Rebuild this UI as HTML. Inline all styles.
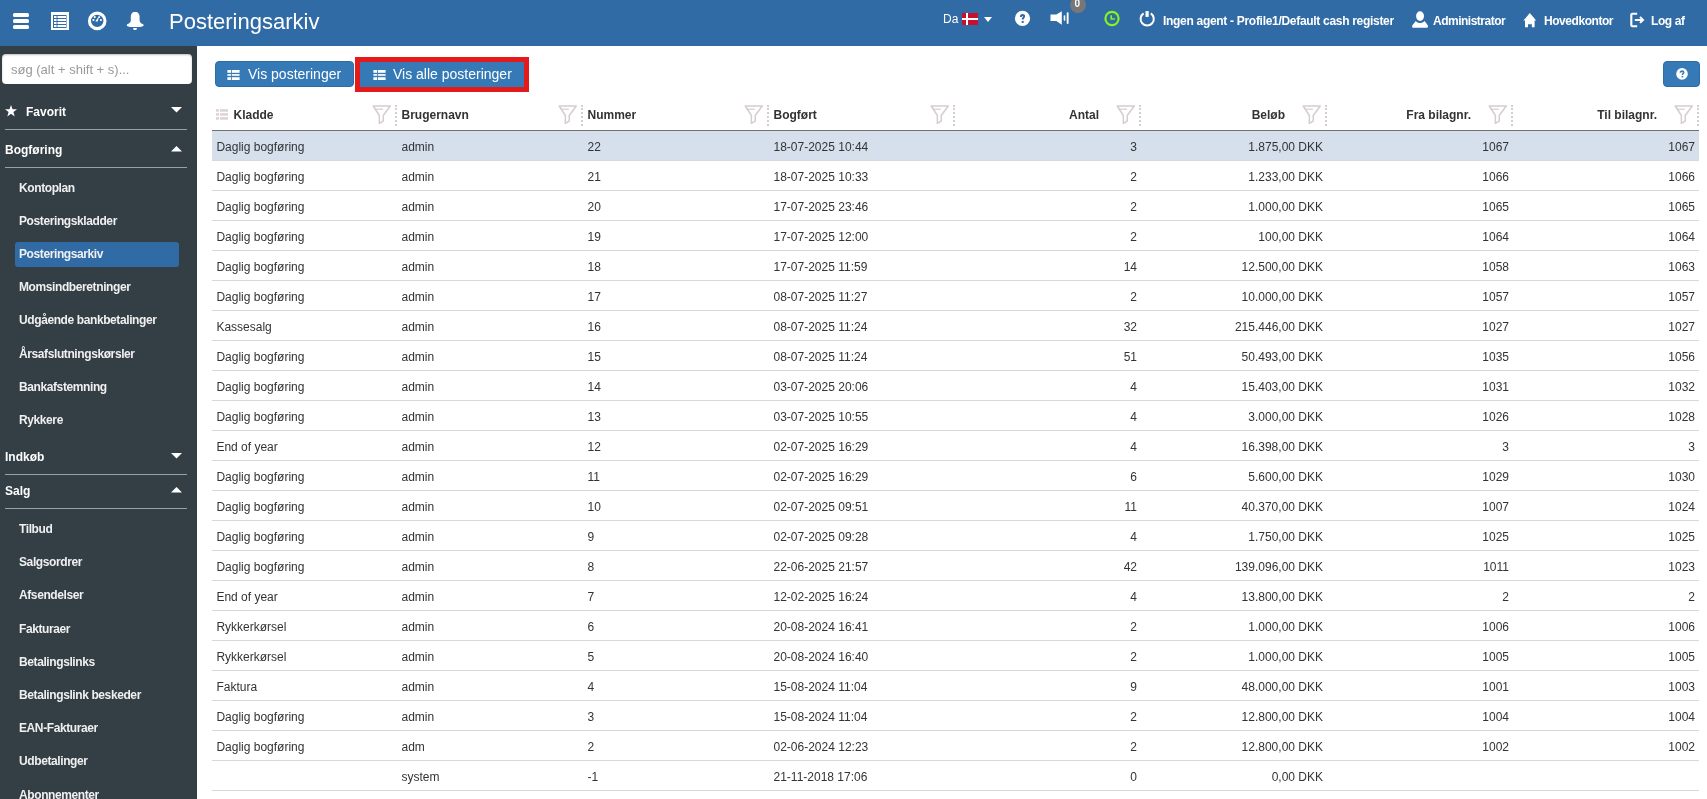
<!DOCTYPE html><html><head><meta charset="utf-8"><style>
*{margin:0;padding:0;box-sizing:border-box}
html,body{will-change:transform;width:1707px;height:799px;overflow:hidden;background:#fff;font-family:"Liberation Sans",sans-serif;color:#333}
.a{position:absolute}
#top{position:absolute;left:0;top:0;width:1707px;height:46px;background:#306ba5}
#side{position:absolute;left:0;top:46px;width:197px;height:753px;background:#343e45}
.tt{position:absolute;color:#fff;font-size:12px;font-weight:bold;line-height:14px;white-space:nowrap}
.si{position:absolute;left:19px;color:#f0f0f0;font-size:12px;font-weight:bold;line-height:14px;white-space:nowrap;letter-spacing:-0.4px}
.sh{position:absolute;left:5px;color:#fff;font-size:12px;font-weight:bold;line-height:14px;white-space:nowrap}
.sep{position:absolute;left:5px;width:182px;height:1px;background:#9aa0a4}
.btn{position:absolute;background:#357ab7;border:1px solid #2e6da4;border-radius:4px;color:#fff;font-size:14px;line-height:16px;white-space:nowrap}
.hd{position:absolute;font-size:12px;font-weight:bold;line-height:14px;color:#333;white-space:nowrap}
.c{position:absolute;font-size:12px;line-height:14px;color:#333;white-space:nowrap}
.r{text-align:right}
.rb{position:absolute;left:212px;width:1487px;height:1px;background:#ddd6d6}
.dv{position:absolute;top:105px;width:2px;height:22px;background:repeating-linear-gradient(to bottom,#d6cdcd 0,#d6cdcd 2px,transparent 2px,transparent 4px)}
</style></head><body>
<div id="top">
<div class="a" style="left:13px;top:13px;width:16px;height:4px;background:#fff;border-radius:1.5px"></div>
<div class="a" style="left:13px;top:19px;width:16px;height:4px;background:#fff;border-radius:1.5px"></div>
<div class="a" style="left:13px;top:25px;width:16px;height:4px;background:#fff;border-radius:1.5px"></div>
<svg class="a" style="left:51px;top:12px" width="18" height="18" viewBox="0 0 18 18"><rect x="0" y="0" width="18" height="18" fill="#fff"/><rect x="2" y="3" width="13.5" height="13" fill="#306ba5"/><g fill="#fff"><rect x="3" y="4" width="12" height="2"/><rect x="3" y="7" width="12" height="2"/><rect x="3" y="10" width="12" height="2"/><rect x="3" y="13" width="12" height="2"/></g><rect x="5.6" y="3" width="0.9" height="13" fill="#306ba5"/></svg>
<svg class="a" style="left:87px;top:11px" width="20" height="20" viewBox="0 0 20 20"><circle cx="10.2" cy="9.9" r="7.75" fill="none" stroke="#fff" stroke-width="3.1"/><g fill="#fff"><circle cx="6.4" cy="9" r="1.1"/><circle cx="7.7" cy="6.1" r="1.1"/><circle cx="12.3" cy="6.1" r="0.9"/><circle cx="13.9" cy="9" r="1.1"/><path d="M8.3 10.6 L10.6 10.6 L12.6 4.3Z"/></g></svg>
<svg class="a" style="left:122px;top:8px" width="26" height="26" viewBox="0 0 26 26"><path d="M11.4 3.9 L14.7 3.9 C16.6 4.6 17.6 6.5 17.6 9 L17.6 12.5 C17.6 14.5 19.5 15.8 21.5 16.5 L21.5 17.9 L18.2 18.9 L7.8 18.9 L4.9 17.9 L4.9 16.5 C6.9 15.8 8.8 14.5 8.8 12.5 L8.8 9 C8.8 6.5 9.6 4.6 11.4 3.9Z" fill="#fff"/><path d="M11 20 L15 20 L14.3 22.1 L11.7 22.1Z" fill="#fff"/></svg>
<div class="a" style="left:169px;top:9px;color:#fff;font-size:22px;line-height:26px;white-space:nowrap">Posteringsarkiv</div>
<div class="a" style="left:943px;top:12px;color:#fff;font-size:12px;line-height:14px">Da</div>
<svg class="a" style="left:962px;top:13px" width="16" height="12" viewBox="0 0 16 12"><rect width="16" height="12" fill="#c8102e"/><rect x="4" width="2" height="12" fill="#fff"/><rect y="5" width="16" height="2" fill="#fff"/></svg>
<svg class="a" style="left:984px;top:17px" width="8" height="5" viewBox="0 0 8 5"><path d="M0 0 L8 0 L4 5Z" fill="#fff"/></svg>
<svg class="a" style="left:1014px;top:10px" width="17" height="17" viewBox="0 0 17 17"><circle cx="8.5" cy="8.4" r="7.6" fill="#fff"/><path d="M6.9 6.9 C6.9 5.4 7.7 4.9 8.5 4.9 C9.5 4.9 10.1 5.5 10.1 6.3 C10.1 7.6 8.7 7.8 8.7 9.6" fill="none" stroke="#306ba5" stroke-width="2"/><rect x="7.7" y="10.9" width="2" height="2" fill="#306ba5"/></svg>
<svg class="a" style="left:1050px;top:10px" width="20" height="16" viewBox="0 0 20 16"><path d="M0.5 4.5 L2 4.5 L6.4 4.5 L11.8 1.2 L11.8 14.8 L6.4 11.1 L0.5 11.1Z" fill="#fff"/><rect x="13.7" y="5.2" width="1.6" height="5.7" rx="0.8" fill="#fff"/><rect x="16.7" y="2.2" width="1.9" height="11.7" rx="0.9" fill="#fff"/></svg>
<div class="a" style="left:1070px;top:-3px;width:16px;height:16px;border-radius:8px;background:#777"></div>
<div class="a" style="left:1069.4px;top:-2px;width:16px;color:#fff;font-size:10px;font-weight:bold;line-height:12px;text-align:center">0</div>
<svg class="a" style="left:1104px;top:10px" width="17" height="17" viewBox="0 0 17 17"><circle cx="8" cy="8.5" r="6.6" fill="none" stroke="#84f51e" stroke-width="2.2"/><path d="M7.2 5.2 L7.2 9 L10.9 9" fill="none" stroke="#84f51e" stroke-width="1.6"/></svg>
<svg class="a" style="left:1139px;top:10px" width="17" height="17" viewBox="0 0 17 17"><path d="M4.6 3.4 A6.6 6.6 0 1 0 11.8 3.4" fill="none" stroke="#fff" stroke-width="2"/><rect x="6.5" y="1.1" width="3.2" height="5.8" fill="#fff"/></svg>
<div class="tt" style="left:1163px;top:14px;letter-spacing:-0.3px">Ingen agent - Profile1/Default cash register</div>
<svg class="a" style="left:1408px;top:6px" width="24" height="26" viewBox="0 0 24 26"><ellipse cx="12.05" cy="10.1" rx="3.95" ry="4.9" fill="#fff"/><path d="M7.8 15 C9 16.5 10.5 17 12 17 C13.5 17 15 16.5 16.6 15 L19.9 19.5 L19.9 21 C19.9 21.5 19.5 21.8 19 21.8 L5 21.8 C4.5 21.8 4.2 21.5 4.2 21 L4.2 19.5Z" fill="#fff"/></svg>
<div class="tt" style="left:1433px;top:14px;letter-spacing:-0.5px">Administrator</div>
<svg class="a" style="left:1518px;top:6px" width="24" height="24" viewBox="0 0 24 24"><path d="M11.8 7 L18.2 14.6 L16.6 14.6 L16.6 21.3 L13.9 21.3 L13.9 18.2 L10 18.2 L10 21.3 L7 21.3 L7 14.6 L5.4 14.6Z" fill="#fff"/></svg>
<div class="tt" style="left:1544px;top:14px;letter-spacing:-0.45px">Hovedkontor</div>
<svg class="a" style="left:1628px;top:10px" width="20" height="20" viewBox="0 0 20 20"><path d="M9.2 3.7 L4.3 3.7 Q3.3 3.7 3.3 4.7 L3.3 15.3 Q3.3 16.3 4.3 16.3 L9.2 16.3" fill="none" stroke="#fff" stroke-width="2.1"/><path d="M6.8 9.9 L15 9.9 M12 6.9 L15 9.9 L12 12.9" fill="none" stroke="#fff" stroke-width="2"/></svg>
<div class="tt" style="left:1651px;top:14px;letter-spacing:-0.4px">Log af</div>
</div>
<div id="side"></div>
<div class="a" style="left:2px;top:54px;width:190px;height:30px;background:#fff;border-radius:4px;box-shadow:inset 0 1px 2px rgba(0,0,0,.25)"></div>
<div class="a" style="left:11px;top:62px;color:#999;font-size:13px;line-height:15px;white-space:nowrap">søg (alt + shift + s)...</div>
<svg class="a" style="left:5px;top:105px" width="12" height="12" viewBox="0 0 12 12"><path d="M6 0 L7.5 4.2 L12 4.3 L8.4 7 L9.7 11.5 L6 8.8 L2.3 11.5 L3.6 7 L0 4.3 L4.5 4.2Z" fill="#fff"/></svg>
<div class="sh" style="left:26px;top:105px">Favorit</div>
<svg class="a" style="left:171px;top:107px" width="11" height="6" viewBox="0 0 11 6"><path d="M0 0 L11 0 L5.5 5.5Z" fill="#fff"/></svg>
<div class="sep" style="top:129px"></div>
<div class="sh" style="top:143px">Bogføring</div>
<svg class="a" style="left:171px;top:146px" width="11" height="6" viewBox="0 0 11 6"><path d="M0 5.5 L5.5 0 L11 5.5Z" fill="#fff"/></svg>
<div class="sep" style="top:167px"></div>
<div class="si" style="top:181px">Kontoplan</div>
<div class="si" style="top:214px">Posteringskladder</div>
<div class="a" style="left:15px;top:242px;width:164px;height:25px;background:#306ba5;border-radius:3px"></div>
<div class="si" style="top:247px">Posteringsarkiv</div>
<div class="si" style="top:280px">Momsindberetninger</div>
<div class="si" style="top:313px">Udgående bankbetalinger</div>
<div class="si" style="top:347px">Årsafslutningskørsler</div>
<div class="si" style="top:380px">Bankafstemning</div>
<div class="si" style="top:413px">Rykkere</div>
<div class="sh" style="top:450px">Indkøb</div>
<svg class="a" style="left:171px;top:453px" width="11" height="6" viewBox="0 0 11 6"><path d="M0 0 L11 0 L5.5 5.5Z" fill="#fff"/></svg>
<div class="sep" style="top:474px"></div>
<div class="sh" style="top:484px">Salg</div>
<svg class="a" style="left:171px;top:487px" width="11" height="6" viewBox="0 0 11 6"><path d="M0 5.5 L5.5 0 L11 5.5Z" fill="#fff"/></svg>
<div class="sep" style="top:508px"></div>
<div class="si" style="top:522.0px">Tilbud</div>
<div class="si" style="top:555.2px">Salgsordrer</div>
<div class="si" style="top:588.4px">Afsendelser</div>
<div class="si" style="top:621.6px">Fakturaer</div>
<div class="si" style="top:654.8px">Betalingslinks</div>
<div class="si" style="top:688.0px">Betalingslink beskeder</div>
<div class="si" style="top:721.2px">EAN-Fakturaer</div>
<div class="si" style="top:754.4px">Udbetalinger</div>
<div class="si" style="top:787.6px">Abonnementer</div>
<div class="btn" style="left:215px;top:61px;width:139px;height:26px"></div>
<svg class="a" style="left:227.0px;top:70px" width="13" height="10" viewBox="0 0 13 10"><g fill="#fff"><rect x="0.4" y="0" width="3.7" height="2.8"/><rect x="4.9" y="0" width="7.7" height="2.8"/><rect x="0.4" y="4.1" width="3.7" height="1.7"/><rect x="4.9" y="4.1" width="7.7" height="1.7"/><rect x="0.4" y="7.2" width="3.7" height="2.8"/><rect x="4.9" y="7.2" width="7.7" height="2.8"/></g></svg>
<div class="a" style="left:248px;top:66px;color:#fff;font-size:14px;line-height:16px;white-space:nowrap">Vis posteringer</div>
<div class="a" style="left:357px;top:60px;width:170px;height:29px;background:#357ab7"></div>
<div class="a" style="left:355px;top:57px;width:174px;height:4.7px;background:#e51b1b"></div>
<div class="a" style="left:355px;top:86.9px;width:174px;height:4.7px;background:#e51b1b"></div>
<div class="a" style="left:355px;top:57px;width:4.6px;height:34.6px;background:#e51b1b"></div>
<div class="a" style="left:524.3px;top:57px;width:4.7px;height:34.6px;background:#e51b1b"></div>
<svg class="a" style="left:372.5px;top:70px" width="13" height="10" viewBox="0 0 13 10"><g fill="#fff"><rect x="0.4" y="0" width="3.7" height="2.8"/><rect x="4.9" y="0" width="7.7" height="2.8"/><rect x="0.4" y="4.1" width="3.7" height="1.7"/><rect x="4.9" y="4.1" width="7.7" height="1.7"/><rect x="0.4" y="7.2" width="3.7" height="2.8"/><rect x="4.9" y="7.2" width="7.7" height="2.8"/></g></svg>
<div class="a" style="left:393px;top:66px;color:#fff;font-size:14px;line-height:16px;white-space:nowrap">Vis alle posteringer</div>
<div class="btn" style="left:1663px;top:61px;width:37px;height:26px"></div>
<svg class="a" style="left:1675.5px;top:68px" width="12" height="12" viewBox="0 0 12 12"><circle cx="6" cy="5.9" r="5.8" fill="#fff"/><path d="M4.4 4.8 C4.4 3.6 5.1 3.1 6.1 3.1 C7.1 3.1 7.7 3.6 7.7 4.4 C7.7 5.5 6.4 5.6 6.4 7" fill="none" stroke="#357ab7" stroke-width="1.6"/><rect x="5.6" y="8" width="1.6" height="1.4" fill="#357ab7"/></svg>
<svg class="a" style="left:216px;top:109px" width="12" height="11" viewBox="0 0 12 11"><g fill="#ddd3d3"><rect x="0" y="0.2" width="3" height="2.5"/><rect x="4" y="0.2" width="8" height="2.5"/><rect x="0" y="4.2" width="3" height="2.5"/><rect x="4" y="4.2" width="8" height="2.5"/><rect x="0" y="8.1" width="3" height="2.6"/><rect x="4" y="8.1" width="8" height="2.6"/></g></svg>
<div class="hd" style="left:233.5px;top:108px">Kladde</div>
<svg class="a" style="left:372.0px;top:104px" width="20" height="21" viewBox="0 0 20 21"><path d="M1.25 2 L18.25 2 L11.25 11.5 L11.25 17 L7.35 19.3 L7.35 11.5 Z" fill="none" stroke="#d6cdcd" stroke-width="1.5" stroke-linejoin="round"/><path d="M2.75 5.2 L10.95 5.2" stroke="#d6cdcd" stroke-width="1.2"/></svg>
<div class="a" style="left:395.00px;top:105px;width:2px;height:2px;background:#d6cdcd"></div><div class="a" style="left:395.00px;top:108px;width:2px;height:2px;background:#d6cdcd"></div><div class="a" style="left:395.00px;top:112px;width:2px;height:2px;background:#d6cdcd"></div><div class="a" style="left:395.00px;top:116px;width:2px;height:2px;background:#d6cdcd"></div><div class="a" style="left:395.00px;top:120px;width:2px;height:2px;background:#d6cdcd"></div><div class="a" style="left:395.00px;top:124px;width:2px;height:2px;background:#d6cdcd"></div>
<div class="hd" style="left:401.5px;top:108px">Brugernavn</div>
<svg class="a" style="left:558.0px;top:104px" width="20" height="21" viewBox="0 0 20 21"><path d="M1.25 2 L18.25 2 L11.25 11.5 L11.25 17 L7.35 19.3 L7.35 11.5 Z" fill="none" stroke="#d6cdcd" stroke-width="1.5" stroke-linejoin="round"/><path d="M2.75 5.2 L10.95 5.2" stroke="#d6cdcd" stroke-width="1.2"/></svg>
<div class="a" style="left:581.00px;top:105px;width:2px;height:2px;background:#d6cdcd"></div><div class="a" style="left:581.00px;top:108px;width:2px;height:2px;background:#d6cdcd"></div><div class="a" style="left:581.00px;top:112px;width:2px;height:2px;background:#d6cdcd"></div><div class="a" style="left:581.00px;top:116px;width:2px;height:2px;background:#d6cdcd"></div><div class="a" style="left:581.00px;top:120px;width:2px;height:2px;background:#d6cdcd"></div><div class="a" style="left:581.00px;top:124px;width:2px;height:2px;background:#d6cdcd"></div>
<div class="hd" style="left:587.5px;top:108px">Nummer</div>
<svg class="a" style="left:744.0px;top:104px" width="20" height="21" viewBox="0 0 20 21"><path d="M1.25 2 L18.25 2 L11.25 11.5 L11.25 17 L7.35 19.3 L7.35 11.5 Z" fill="none" stroke="#d6cdcd" stroke-width="1.5" stroke-linejoin="round"/><path d="M2.75 5.2 L10.95 5.2" stroke="#d6cdcd" stroke-width="1.2"/></svg>
<div class="a" style="left:767.00px;top:105px;width:2px;height:2px;background:#d6cdcd"></div><div class="a" style="left:767.00px;top:108px;width:2px;height:2px;background:#d6cdcd"></div><div class="a" style="left:767.00px;top:112px;width:2px;height:2px;background:#d6cdcd"></div><div class="a" style="left:767.00px;top:116px;width:2px;height:2px;background:#d6cdcd"></div><div class="a" style="left:767.00px;top:120px;width:2px;height:2px;background:#d6cdcd"></div><div class="a" style="left:767.00px;top:124px;width:2px;height:2px;background:#d6cdcd"></div>
<div class="hd" style="left:773.5px;top:108px">Bogført</div>
<svg class="a" style="left:930.0px;top:104px" width="20" height="21" viewBox="0 0 20 21"><path d="M1.25 2 L18.25 2 L11.25 11.5 L11.25 17 L7.35 19.3 L7.35 11.5 Z" fill="none" stroke="#d6cdcd" stroke-width="1.5" stroke-linejoin="round"/><path d="M2.75 5.2 L10.95 5.2" stroke="#d6cdcd" stroke-width="1.2"/></svg>
<div class="a" style="left:953.00px;top:105px;width:2px;height:2px;background:#d6cdcd"></div><div class="a" style="left:953.00px;top:108px;width:2px;height:2px;background:#d6cdcd"></div><div class="a" style="left:953.00px;top:112px;width:2px;height:2px;background:#d6cdcd"></div><div class="a" style="left:953.00px;top:116px;width:2px;height:2px;background:#d6cdcd"></div><div class="a" style="left:953.00px;top:120px;width:2px;height:2px;background:#d6cdcd"></div><div class="a" style="left:953.00px;top:124px;width:2px;height:2px;background:#d6cdcd"></div>
<div class="hd r" style="left:956.0px;width:143.0px;top:108px">Antal</div>
<svg class="a" style="left:1116.0px;top:104px" width="20" height="21" viewBox="0 0 20 21"><path d="M1.25 2 L18.25 2 L11.25 11.5 L11.25 17 L7.35 19.3 L7.35 11.5 Z" fill="none" stroke="#d6cdcd" stroke-width="1.5" stroke-linejoin="round"/><path d="M2.75 5.2 L10.95 5.2" stroke="#d6cdcd" stroke-width="1.2"/></svg>
<div class="a" style="left:1139.00px;top:105px;width:2px;height:2px;background:#d6cdcd"></div><div class="a" style="left:1139.00px;top:108px;width:2px;height:2px;background:#d6cdcd"></div><div class="a" style="left:1139.00px;top:112px;width:2px;height:2px;background:#d6cdcd"></div><div class="a" style="left:1139.00px;top:116px;width:2px;height:2px;background:#d6cdcd"></div><div class="a" style="left:1139.00px;top:120px;width:2px;height:2px;background:#d6cdcd"></div><div class="a" style="left:1139.00px;top:124px;width:2px;height:2px;background:#d6cdcd"></div>
<div class="hd r" style="left:1142.0px;width:143.0px;top:108px">Beløb</div>
<svg class="a" style="left:1302.0px;top:104px" width="20" height="21" viewBox="0 0 20 21"><path d="M1.25 2 L18.25 2 L11.25 11.5 L11.25 17 L7.35 19.3 L7.35 11.5 Z" fill="none" stroke="#d6cdcd" stroke-width="1.5" stroke-linejoin="round"/><path d="M2.75 5.2 L10.95 5.2" stroke="#d6cdcd" stroke-width="1.2"/></svg>
<div class="a" style="left:1325.00px;top:105px;width:2px;height:2px;background:#d6cdcd"></div><div class="a" style="left:1325.00px;top:108px;width:2px;height:2px;background:#d6cdcd"></div><div class="a" style="left:1325.00px;top:112px;width:2px;height:2px;background:#d6cdcd"></div><div class="a" style="left:1325.00px;top:116px;width:2px;height:2px;background:#d6cdcd"></div><div class="a" style="left:1325.00px;top:120px;width:2px;height:2px;background:#d6cdcd"></div><div class="a" style="left:1325.00px;top:124px;width:2px;height:2px;background:#d6cdcd"></div>
<div class="hd r" style="left:1328.0px;width:143.0px;top:108px">Fra bilagnr.</div>
<svg class="a" style="left:1488.0px;top:104px" width="20" height="21" viewBox="0 0 20 21"><path d="M1.25 2 L18.25 2 L11.25 11.5 L11.25 17 L7.35 19.3 L7.35 11.5 Z" fill="none" stroke="#d6cdcd" stroke-width="1.5" stroke-linejoin="round"/><path d="M2.75 5.2 L10.95 5.2" stroke="#d6cdcd" stroke-width="1.2"/></svg>
<div class="a" style="left:1511.00px;top:105px;width:2px;height:2px;background:#d6cdcd"></div><div class="a" style="left:1511.00px;top:108px;width:2px;height:2px;background:#d6cdcd"></div><div class="a" style="left:1511.00px;top:112px;width:2px;height:2px;background:#d6cdcd"></div><div class="a" style="left:1511.00px;top:116px;width:2px;height:2px;background:#d6cdcd"></div><div class="a" style="left:1511.00px;top:120px;width:2px;height:2px;background:#d6cdcd"></div><div class="a" style="left:1511.00px;top:124px;width:2px;height:2px;background:#d6cdcd"></div>
<div class="hd r" style="left:1514.0px;width:143.0px;top:108px">Til bilagnr.</div>
<svg class="a" style="left:1674.0px;top:104px" width="20" height="21" viewBox="0 0 20 21"><path d="M1.25 2 L18.25 2 L11.25 11.5 L11.25 17 L7.35 19.3 L7.35 11.5 Z" fill="none" stroke="#d6cdcd" stroke-width="1.5" stroke-linejoin="round"/><path d="M2.75 5.2 L10.95 5.2" stroke="#d6cdcd" stroke-width="1.2"/></svg>
<div class="a" style="left:1697.00px;top:105px;width:2px;height:2px;background:#d6cdcd"></div><div class="a" style="left:1697.00px;top:108px;width:2px;height:2px;background:#d6cdcd"></div><div class="a" style="left:1697.00px;top:112px;width:2px;height:2px;background:#d6cdcd"></div><div class="a" style="left:1697.00px;top:116px;width:2px;height:2px;background:#d6cdcd"></div><div class="a" style="left:1697.00px;top:120px;width:2px;height:2px;background:#d6cdcd"></div><div class="a" style="left:1697.00px;top:124px;width:2px;height:2px;background:#d6cdcd"></div>
<div class="a" style="left:212px;top:130px;width:1487px;height:1px;background:#707070"></div>
<div class="a" style="left:212px;top:131px;width:1487px;height:29px;background:#d5e0ec"></div>
<div class="rb" style="top:160px"></div>
<div class="c" style="left:216.4px;top:140px">Daglig bogføring</div>
<div class="c" style="left:401.5px;top:140px">admin</div>
<div class="c" style="left:587.5px;top:140px">22</div>
<div class="c" style="left:773.5px;top:140px">18-07-2025 10:44</div>
<div class="c r" style="left:956.0px;width:181.0px;top:140px">3</div>
<div class="c r" style="left:1142.0px;width:181.0px;top:140px">1.875,00 DKK</div>
<div class="c r" style="left:1328.0px;width:181.0px;top:140px">1067</div>
<div class="c r" style="left:1514.0px;width:181.0px;top:140px">1067</div>
<div class="rb" style="top:190px"></div>
<div class="c" style="left:216.4px;top:170px">Daglig bogføring</div>
<div class="c" style="left:401.5px;top:170px">admin</div>
<div class="c" style="left:587.5px;top:170px">21</div>
<div class="c" style="left:773.5px;top:170px">18-07-2025 10:33</div>
<div class="c r" style="left:956.0px;width:181.0px;top:170px">2</div>
<div class="c r" style="left:1142.0px;width:181.0px;top:170px">1.233,00 DKK</div>
<div class="c r" style="left:1328.0px;width:181.0px;top:170px">1066</div>
<div class="c r" style="left:1514.0px;width:181.0px;top:170px">1066</div>
<div class="rb" style="top:220px"></div>
<div class="c" style="left:216.4px;top:200px">Daglig bogføring</div>
<div class="c" style="left:401.5px;top:200px">admin</div>
<div class="c" style="left:587.5px;top:200px">20</div>
<div class="c" style="left:773.5px;top:200px">17-07-2025 23:46</div>
<div class="c r" style="left:956.0px;width:181.0px;top:200px">2</div>
<div class="c r" style="left:1142.0px;width:181.0px;top:200px">1.000,00 DKK</div>
<div class="c r" style="left:1328.0px;width:181.0px;top:200px">1065</div>
<div class="c r" style="left:1514.0px;width:181.0px;top:200px">1065</div>
<div class="rb" style="top:250px"></div>
<div class="c" style="left:216.4px;top:230px">Daglig bogføring</div>
<div class="c" style="left:401.5px;top:230px">admin</div>
<div class="c" style="left:587.5px;top:230px">19</div>
<div class="c" style="left:773.5px;top:230px">17-07-2025 12:00</div>
<div class="c r" style="left:956.0px;width:181.0px;top:230px">2</div>
<div class="c r" style="left:1142.0px;width:181.0px;top:230px">100,00 DKK</div>
<div class="c r" style="left:1328.0px;width:181.0px;top:230px">1064</div>
<div class="c r" style="left:1514.0px;width:181.0px;top:230px">1064</div>
<div class="rb" style="top:280px"></div>
<div class="c" style="left:216.4px;top:260px">Daglig bogføring</div>
<div class="c" style="left:401.5px;top:260px">admin</div>
<div class="c" style="left:587.5px;top:260px">18</div>
<div class="c" style="left:773.5px;top:260px">17-07-2025 11:59</div>
<div class="c r" style="left:956.0px;width:181.0px;top:260px">14</div>
<div class="c r" style="left:1142.0px;width:181.0px;top:260px">12.500,00 DKK</div>
<div class="c r" style="left:1328.0px;width:181.0px;top:260px">1058</div>
<div class="c r" style="left:1514.0px;width:181.0px;top:260px">1063</div>
<div class="rb" style="top:310px"></div>
<div class="c" style="left:216.4px;top:290px">Daglig bogføring</div>
<div class="c" style="left:401.5px;top:290px">admin</div>
<div class="c" style="left:587.5px;top:290px">17</div>
<div class="c" style="left:773.5px;top:290px">08-07-2025 11:27</div>
<div class="c r" style="left:956.0px;width:181.0px;top:290px">2</div>
<div class="c r" style="left:1142.0px;width:181.0px;top:290px">10.000,00 DKK</div>
<div class="c r" style="left:1328.0px;width:181.0px;top:290px">1057</div>
<div class="c r" style="left:1514.0px;width:181.0px;top:290px">1057</div>
<div class="rb" style="top:340px"></div>
<div class="c" style="left:216.4px;top:320px">Kassesalg</div>
<div class="c" style="left:401.5px;top:320px">admin</div>
<div class="c" style="left:587.5px;top:320px">16</div>
<div class="c" style="left:773.5px;top:320px">08-07-2025 11:24</div>
<div class="c r" style="left:956.0px;width:181.0px;top:320px">32</div>
<div class="c r" style="left:1142.0px;width:181.0px;top:320px">215.446,00 DKK</div>
<div class="c r" style="left:1328.0px;width:181.0px;top:320px">1027</div>
<div class="c r" style="left:1514.0px;width:181.0px;top:320px">1027</div>
<div class="rb" style="top:370px"></div>
<div class="c" style="left:216.4px;top:350px">Daglig bogføring</div>
<div class="c" style="left:401.5px;top:350px">admin</div>
<div class="c" style="left:587.5px;top:350px">15</div>
<div class="c" style="left:773.5px;top:350px">08-07-2025 11:24</div>
<div class="c r" style="left:956.0px;width:181.0px;top:350px">51</div>
<div class="c r" style="left:1142.0px;width:181.0px;top:350px">50.493,00 DKK</div>
<div class="c r" style="left:1328.0px;width:181.0px;top:350px">1035</div>
<div class="c r" style="left:1514.0px;width:181.0px;top:350px">1056</div>
<div class="rb" style="top:400px"></div>
<div class="c" style="left:216.4px;top:380px">Daglig bogføring</div>
<div class="c" style="left:401.5px;top:380px">admin</div>
<div class="c" style="left:587.5px;top:380px">14</div>
<div class="c" style="left:773.5px;top:380px">03-07-2025 20:06</div>
<div class="c r" style="left:956.0px;width:181.0px;top:380px">4</div>
<div class="c r" style="left:1142.0px;width:181.0px;top:380px">15.403,00 DKK</div>
<div class="c r" style="left:1328.0px;width:181.0px;top:380px">1031</div>
<div class="c r" style="left:1514.0px;width:181.0px;top:380px">1032</div>
<div class="rb" style="top:430px"></div>
<div class="c" style="left:216.4px;top:410px">Daglig bogføring</div>
<div class="c" style="left:401.5px;top:410px">admin</div>
<div class="c" style="left:587.5px;top:410px">13</div>
<div class="c" style="left:773.5px;top:410px">03-07-2025 10:55</div>
<div class="c r" style="left:956.0px;width:181.0px;top:410px">4</div>
<div class="c r" style="left:1142.0px;width:181.0px;top:410px">3.000,00 DKK</div>
<div class="c r" style="left:1328.0px;width:181.0px;top:410px">1026</div>
<div class="c r" style="left:1514.0px;width:181.0px;top:410px">1028</div>
<div class="rb" style="top:460px"></div>
<div class="c" style="left:216.4px;top:440px">End of year</div>
<div class="c" style="left:401.5px;top:440px">admin</div>
<div class="c" style="left:587.5px;top:440px">12</div>
<div class="c" style="left:773.5px;top:440px">02-07-2025 16:29</div>
<div class="c r" style="left:956.0px;width:181.0px;top:440px">4</div>
<div class="c r" style="left:1142.0px;width:181.0px;top:440px">16.398,00 DKK</div>
<div class="c r" style="left:1328.0px;width:181.0px;top:440px">3</div>
<div class="c r" style="left:1514.0px;width:181.0px;top:440px">3</div>
<div class="rb" style="top:490px"></div>
<div class="c" style="left:216.4px;top:470px">Daglig bogføring</div>
<div class="c" style="left:401.5px;top:470px">admin</div>
<div class="c" style="left:587.5px;top:470px">11</div>
<div class="c" style="left:773.5px;top:470px">02-07-2025 16:29</div>
<div class="c r" style="left:956.0px;width:181.0px;top:470px">6</div>
<div class="c r" style="left:1142.0px;width:181.0px;top:470px">5.600,00 DKK</div>
<div class="c r" style="left:1328.0px;width:181.0px;top:470px">1029</div>
<div class="c r" style="left:1514.0px;width:181.0px;top:470px">1030</div>
<div class="rb" style="top:520px"></div>
<div class="c" style="left:216.4px;top:500px">Daglig bogføring</div>
<div class="c" style="left:401.5px;top:500px">admin</div>
<div class="c" style="left:587.5px;top:500px">10</div>
<div class="c" style="left:773.5px;top:500px">02-07-2025 09:51</div>
<div class="c r" style="left:956.0px;width:181.0px;top:500px">11</div>
<div class="c r" style="left:1142.0px;width:181.0px;top:500px">40.370,00 DKK</div>
<div class="c r" style="left:1328.0px;width:181.0px;top:500px">1007</div>
<div class="c r" style="left:1514.0px;width:181.0px;top:500px">1024</div>
<div class="rb" style="top:550px"></div>
<div class="c" style="left:216.4px;top:530px">Daglig bogføring</div>
<div class="c" style="left:401.5px;top:530px">admin</div>
<div class="c" style="left:587.5px;top:530px">9</div>
<div class="c" style="left:773.5px;top:530px">02-07-2025 09:28</div>
<div class="c r" style="left:956.0px;width:181.0px;top:530px">4</div>
<div class="c r" style="left:1142.0px;width:181.0px;top:530px">1.750,00 DKK</div>
<div class="c r" style="left:1328.0px;width:181.0px;top:530px">1025</div>
<div class="c r" style="left:1514.0px;width:181.0px;top:530px">1025</div>
<div class="rb" style="top:580px"></div>
<div class="c" style="left:216.4px;top:560px">Daglig bogføring</div>
<div class="c" style="left:401.5px;top:560px">admin</div>
<div class="c" style="left:587.5px;top:560px">8</div>
<div class="c" style="left:773.5px;top:560px">22-06-2025 21:57</div>
<div class="c r" style="left:956.0px;width:181.0px;top:560px">42</div>
<div class="c r" style="left:1142.0px;width:181.0px;top:560px">139.096,00 DKK</div>
<div class="c r" style="left:1328.0px;width:181.0px;top:560px">1011</div>
<div class="c r" style="left:1514.0px;width:181.0px;top:560px">1023</div>
<div class="rb" style="top:610px"></div>
<div class="c" style="left:216.4px;top:590px">End of year</div>
<div class="c" style="left:401.5px;top:590px">admin</div>
<div class="c" style="left:587.5px;top:590px">7</div>
<div class="c" style="left:773.5px;top:590px">12-02-2025 16:24</div>
<div class="c r" style="left:956.0px;width:181.0px;top:590px">4</div>
<div class="c r" style="left:1142.0px;width:181.0px;top:590px">13.800,00 DKK</div>
<div class="c r" style="left:1328.0px;width:181.0px;top:590px">2</div>
<div class="c r" style="left:1514.0px;width:181.0px;top:590px">2</div>
<div class="rb" style="top:640px"></div>
<div class="c" style="left:216.4px;top:620px">Rykkerkørsel</div>
<div class="c" style="left:401.5px;top:620px">admin</div>
<div class="c" style="left:587.5px;top:620px">6</div>
<div class="c" style="left:773.5px;top:620px">20-08-2024 16:41</div>
<div class="c r" style="left:956.0px;width:181.0px;top:620px">2</div>
<div class="c r" style="left:1142.0px;width:181.0px;top:620px">1.000,00 DKK</div>
<div class="c r" style="left:1328.0px;width:181.0px;top:620px">1006</div>
<div class="c r" style="left:1514.0px;width:181.0px;top:620px">1006</div>
<div class="rb" style="top:670px"></div>
<div class="c" style="left:216.4px;top:650px">Rykkerkørsel</div>
<div class="c" style="left:401.5px;top:650px">admin</div>
<div class="c" style="left:587.5px;top:650px">5</div>
<div class="c" style="left:773.5px;top:650px">20-08-2024 16:40</div>
<div class="c r" style="left:956.0px;width:181.0px;top:650px">2</div>
<div class="c r" style="left:1142.0px;width:181.0px;top:650px">1.000,00 DKK</div>
<div class="c r" style="left:1328.0px;width:181.0px;top:650px">1005</div>
<div class="c r" style="left:1514.0px;width:181.0px;top:650px">1005</div>
<div class="rb" style="top:700px"></div>
<div class="c" style="left:216.4px;top:680px">Faktura</div>
<div class="c" style="left:401.5px;top:680px">admin</div>
<div class="c" style="left:587.5px;top:680px">4</div>
<div class="c" style="left:773.5px;top:680px">15-08-2024 11:04</div>
<div class="c r" style="left:956.0px;width:181.0px;top:680px">9</div>
<div class="c r" style="left:1142.0px;width:181.0px;top:680px">48.000,00 DKK</div>
<div class="c r" style="left:1328.0px;width:181.0px;top:680px">1001</div>
<div class="c r" style="left:1514.0px;width:181.0px;top:680px">1003</div>
<div class="rb" style="top:730px"></div>
<div class="c" style="left:216.4px;top:710px">Daglig bogføring</div>
<div class="c" style="left:401.5px;top:710px">admin</div>
<div class="c" style="left:587.5px;top:710px">3</div>
<div class="c" style="left:773.5px;top:710px">15-08-2024 11:04</div>
<div class="c r" style="left:956.0px;width:181.0px;top:710px">2</div>
<div class="c r" style="left:1142.0px;width:181.0px;top:710px">12.800,00 DKK</div>
<div class="c r" style="left:1328.0px;width:181.0px;top:710px">1004</div>
<div class="c r" style="left:1514.0px;width:181.0px;top:710px">1004</div>
<div class="rb" style="top:760px"></div>
<div class="c" style="left:216.4px;top:740px">Daglig bogføring</div>
<div class="c" style="left:401.5px;top:740px">adm</div>
<div class="c" style="left:587.5px;top:740px">2</div>
<div class="c" style="left:773.5px;top:740px">02-06-2024 12:23</div>
<div class="c r" style="left:956.0px;width:181.0px;top:740px">2</div>
<div class="c r" style="left:1142.0px;width:181.0px;top:740px">12.800,00 DKK</div>
<div class="c r" style="left:1328.0px;width:181.0px;top:740px">1002</div>
<div class="c r" style="left:1514.0px;width:181.0px;top:740px">1002</div>
<div class="rb" style="top:790px"></div>
<div class="c" style="left:401.5px;top:770px">system</div>
<div class="c" style="left:587.5px;top:770px">-1</div>
<div class="c" style="left:773.5px;top:770px">21-11-2018 17:06</div>
<div class="c r" style="left:956.0px;width:181.0px;top:770px">0</div>
<div class="c r" style="left:1142.0px;width:181.0px;top:770px">0,00 DKK</div>
</body></html>
